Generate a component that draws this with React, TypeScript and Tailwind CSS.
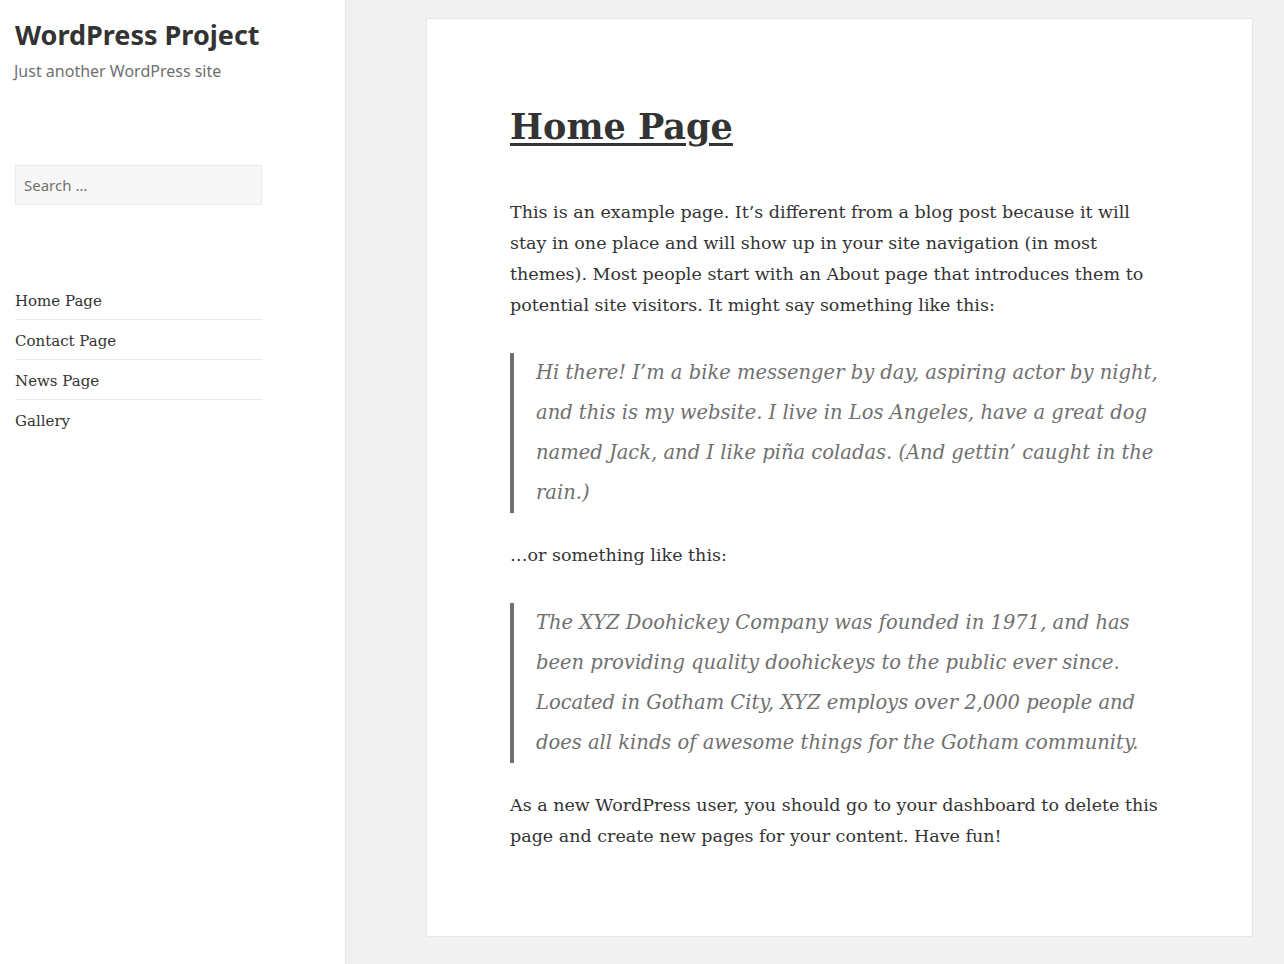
import React from 'react';

const pages = ['Home Page', 'Contact Page', 'News Page', 'Gallery'];

export default function App() {
  return (
    <div className="flex min-h-[964px] bg-[#f1f1f1] text-[#333333] font-['DejaVu_Serif',serif]">
      <aside className="w-[346px] shrink-0 bg-white border-r border-[#e6e6e6] pl-[15px] pt-[18px]">
        <div className="w-[247px]">
          <h1 className="font-['Noto_Sans',sans-serif] font-bold text-[27px] leading-[34px] text-[#333333]">WordPress Project</h1>
          <p className="font-['Noto_Sans',sans-serif] text-[16px] leading-[24px] text-[#707070] mt-[7px] -ml-[1px]">Just another WordPress site</p>

          <input
            type="search"
            placeholder="Search …"
            className="mt-[82px] w-[247px] h-[40px] bg-[#f7f7f7] border border-[#eaeaea] px-[8px] font-['Noto_Sans',sans-serif] text-[15px] placeholder:text-[#707070] outline-none"
          />

          <ul className="mt-[75px]">
            {pages.map((p, i) => (
              <li
                key={p}
                className={`h-[40px] flex items-center pt-[3px] text-[15px] text-[#333333] ${i < pages.length - 1 ? 'border-b border-[#eaeaea]' : ''}`}
              >
                <a href="#">{p}</a>
              </li>
            ))}
          </ul>
        </div>
      </aside>

      <main className="flex-1 pl-[81px] pr-[32px] pt-[19px] pb-[27px]">
        <article className="bg-white shadow-[0_0_1px_rgba(0,0,0,0.25)] px-[83px] pt-[84px] pb-[84px]">
          <h2 className="text-[35px] leading-[48px] font-bold underline decoration-[3px] underline-offset-[4px] mb-[46px]">
            <a href="#">Home Page</a>
          </h2>

          <div className="text-[17.5px] leading-[31px]">
            <p className="mb-[32px]">
              This is an example page. It’s different from a blog post because it will stay in one place and will show up in your site navigation (in most themes). Most people start with an About page that introduces them to potential site visitors. It might say something like this:
            </p>
            <blockquote className="border-l-4 border-[#707070] pl-[22px] mb-[27px] italic text-[#707070] text-[19.5px] leading-[40px]">
              Hi there! I’m a bike messenger by day, aspiring actor by night, and this is my website. I live in Los Angeles, have a great dog named Jack, and I like piña coladas. (And gettin’ caught in the rain.)
            </blockquote>
            <p className="mb-[32px]">…or something like this:</p>
            <blockquote className="border-l-4 border-[#707070] pl-[22px] mb-[27px] italic text-[#707070] text-[19.5px] leading-[40px]">
              The XYZ Doohickey Company was founded in 1971, and has been providing quality doohickeys to the public ever since. Located in Gotham City, XYZ employs over 2,000 people and does all kinds of awesome things for the Gotham community.
            </blockquote>
            <p>
              As a new WordPress user, you should go to your dashboard to delete this page and create new pages for your content. Have fun!
            </p>
          </div>
        </article>
      </main>
    </div>
  );
}
